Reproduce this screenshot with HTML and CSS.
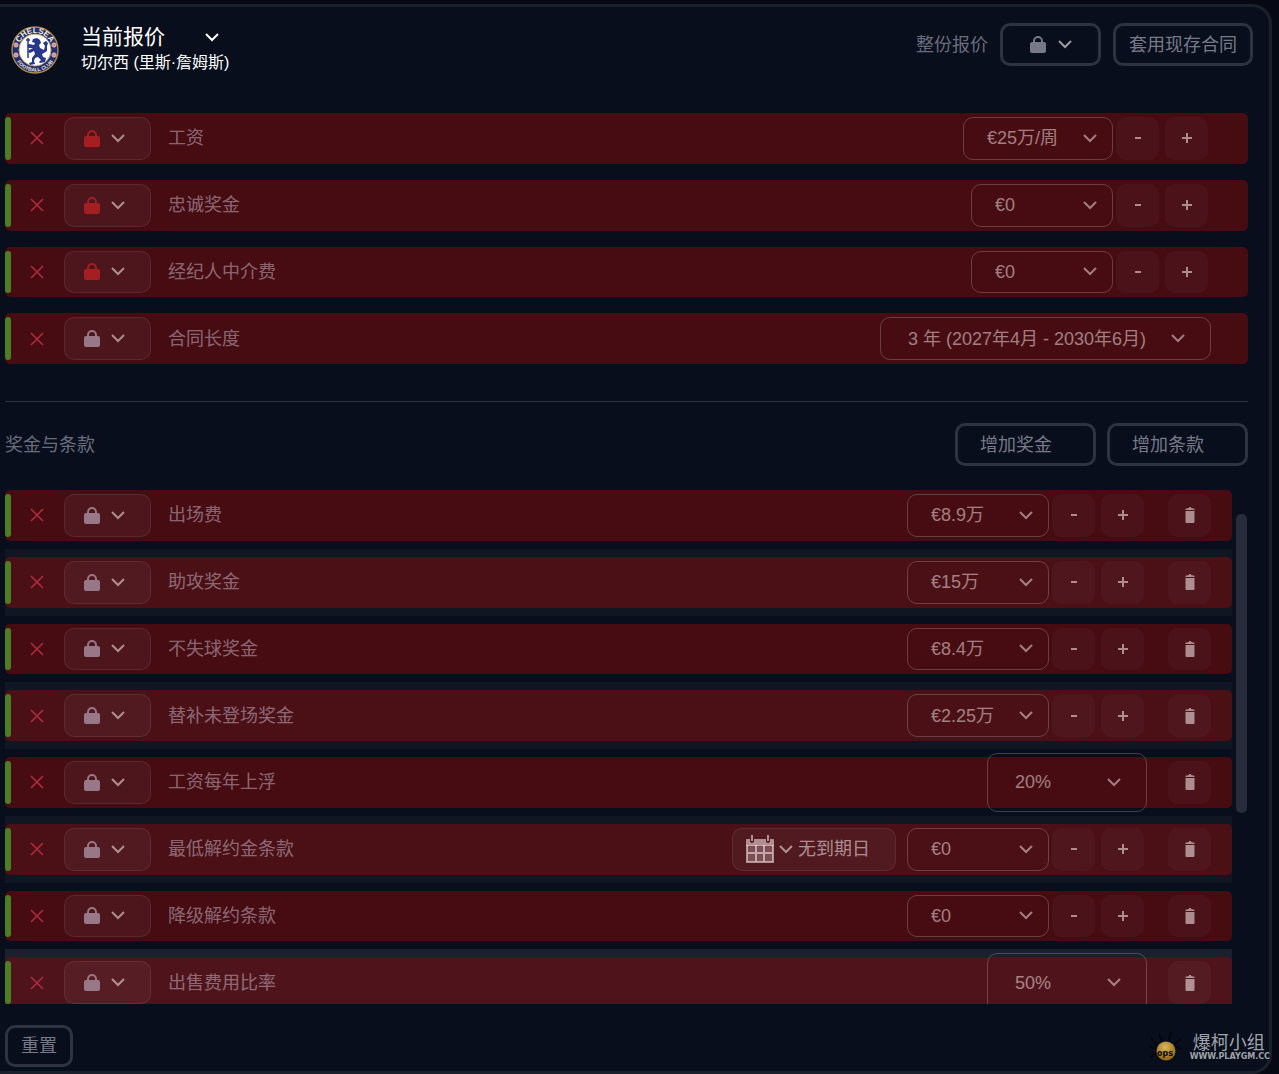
FILE: index.html
```html
<!DOCTYPE html>
<html lang="zh-CN">
<head>
    <meta charset="UTF-8">
    <meta name="viewport" content="width=device-width, initial-scale=1.0">
    <title>当前报价</title>
    <link rel="stylesheet" href="styles.css">
</head>
<body>
<svg class="sprite" aria-hidden="true">
    <symbol id="lock" viewBox="0 0 16 17">
        <path d="M4 8V5a4 4 0 0 1 8 0V8" fill="none" stroke="currentColor" stroke-width="2"/>
        <rect x="0" y="6" width="16" height="11" rx="2" fill="currentColor"/>
    </symbol>
    <symbol id="chevron" viewBox="0 0 14 9">
        <path d="M1 1l6 6 6-6" fill="none" stroke="currentColor" stroke-width="2"/>
    </symbol>
    <symbol id="cross" viewBox="0 0 14 14">
        <path d="M1 1l12 12M13 1L1 13" fill="none" stroke="currentColor" stroke-width="1.6"/>
    </symbol>
    <symbol id="trash" viewBox="0 0 10 16">
        <path d="M.5 3V1.8L4 1V0h2v1l3.500.8V3zM.5 4h9v11a1 1 0 0 1-1 1h-7a1 1 0 0 1-1-1z" fill="currentColor"/>
    </symbol>
    <symbol id="minus" viewBox="0 0 12 12">
        <path d="M3 6h6" stroke="currentColor" stroke-width="2"/>
    </symbol>
    <symbol id="plus" viewBox="0 0 12 12">
        <path d="M1 6h10M6 1v10" stroke="currentColor" stroke-width="2"/>
    </symbol>
    <symbol id="calendar" viewBox="0 0 28 28">
        <rect x="1" y="10" width="26" height="17" fill="currentColor" opacity=".45"/>
        <path d="M1 4h3v2a2 2 0 0 0 4 0V4h12v2a2 2 0 0 0 4 0V4h3a1 1 0 0 1 1 1v6H0V5a1 1 0 0 1 1-1z" fill="currentColor"/>
        <path d="M6 0v6M22 0v6" stroke="currentColor" stroke-width="2"/>
        <path d="M1 10v17h26V10M10 10v17M18 10v17M1 18h26" fill="none" stroke="currentColor" stroke-width="2"/>
    </symbol>
</svg>

<main class="panel">
    <header class="header">
        <svg class="crest" viewBox="0 0 48 48" role="img" aria-label="Chelsea">
            <defs>
                <path id="arc-top" d="M7 24a17 17 0 0 1 34 0"/>
                <path id="arc-bottom" d="M2.500 24a21.500 21.500 0 0 0 43 0"/>
            </defs>
            <circle cx="24" cy="24" r="23" fill="#232e6d" stroke="#b08a50" stroke-width="1.400"/>
            <circle cx="24" cy="24" r="16" fill="#fff" stroke="#c5a878"/>
            <text class="crest-top"><textPath href="#arc-top" startOffset="50%" text-anchor="middle">CHELSEA</textPath></text>
            <text class="crest-bottom"><textPath href="#arc-bottom" startOffset="50%" text-anchor="middle">FOOTBALL CLUB</textPath></text>
            <g fill="#d98a94" stroke="#f0d8d8" stroke-width=".6">
                <circle cx="5" cy="19" r="2.200"/><circle cx="5" cy="29" r="2.200"/>
                <circle cx="43" cy="19" r="2.200"/><circle cx="43" cy="29" r="2.200"/>
            </g>
            <path d="M22 13l4-1 3 2 1 3-2 2 1 3 4 2 1-4-2-3 3-2 2 2-1 3 0 5-3 2-2 1 1 3 3 1-1 4-5 1-1-1 2-2-3-3-3 1-1 3 1 3-5 1-1-2 3-1 0-4 3-4-1-3-4 2-2-1 1-2 4-2-4 0-2-2 2-2 5 1 1-2-3-1z" fill="#27378a"/>
            <path d="M17 12v20M15 14h4" stroke="#27378a" stroke-width="1.500"/>
        </svg>
        <div class="heading">
            <div class="select title-select">
                <select aria-label="报价">
                    <option>当前报价</option>
                </select>
                <svg class="chevron"><use href="#chevron"/></svg>
            </div>
            <div class="subtitle">切尔西 (里斯·詹姆斯)</div>
        </div>
        <div class="header-actions">
            <span class="muted">整份报价</span>
            <button type="button" class="btn btn-lock-all" aria-label="锁定整份报价"><svg class="lock"><use href="#lock"/></svg><svg class="chevron"><use href="#chevron"/></svg></button>
            <button type="button" class="btn">套用现存合同</button>
        </div>
    </header>

    <section class="terms">
        <div class="row">
            <div class="row-body">
                <span class="bar"></span>
                <svg class="cross"><use href="#cross"/></svg>
                <button type="button" class="lock-btn locked" aria-label="锁定"><svg class="lock"><use href="#lock"/></svg><svg class="chevron"><use href="#chevron"/></svg></button>
                <label class="name" for="wage">工资</label>
                <div class="select select-wide"><select id="wage"><option>€25万/周</option></select><svg class="chevron"><use href="#chevron"/></svg></div>
                <button type="button" class="step" aria-label="减少"><svg><use href="#minus"/></svg></button>
                <button type="button" class="step" aria-label="增加"><svg><use href="#plus"/></svg></button>
            </div>
        </div>
        <div class="row">
            <div class="row-body">
                <span class="bar"></span>
                <svg class="cross"><use href="#cross"/></svg>
                <button type="button" class="lock-btn locked" aria-label="锁定"><svg class="lock"><use href="#lock"/></svg><svg class="chevron"><use href="#chevron"/></svg></button>
                <label class="name" for="loyalty">忠诚奖金</label>
                <div class="select"><select id="loyalty"><option>€0</option></select><svg class="chevron"><use href="#chevron"/></svg></div>
                <button type="button" class="step" aria-label="减少"><svg><use href="#minus"/></svg></button>
                <button type="button" class="step" aria-label="增加"><svg><use href="#plus"/></svg></button>
            </div>
        </div>
        <div class="row">
            <div class="row-body">
                <span class="bar"></span>
                <svg class="cross"><use href="#cross"/></svg>
                <button type="button" class="lock-btn locked" aria-label="锁定"><svg class="lock"><use href="#lock"/></svg><svg class="chevron"><use href="#chevron"/></svg></button>
                <label class="name" for="agent">经纪人中介费</label>
                <div class="select"><select id="agent"><option>€0</option></select><svg class="chevron"><use href="#chevron"/></svg></div>
                <button type="button" class="step" aria-label="减少"><svg><use href="#minus"/></svg></button>
                <button type="button" class="step" aria-label="增加"><svg><use href="#plus"/></svg></button>
            </div>
        </div>
        <div class="row">
            <div class="row-body">
                <span class="bar"></span>
                <svg class="cross"><use href="#cross"/></svg>
                <button type="button" class="lock-btn" aria-label="锁定"><svg class="lock"><use href="#lock"/></svg><svg class="chevron"><use href="#chevron"/></svg></button>
                <label class="name" for="length">合同长度</label>
                <div class="select select-length"><select id="length"><option>3 年 (2027年4月 - 2030年6月)</option></select><svg class="chevron"><use href="#chevron"/></svg></div>
            </div>
        </div>
    </section>

    <div class="section-head">
        <h2 class="muted">奖金与条款</h2>
        <button type="button" class="btn btn-add">增加奖金</button>
        <button type="button" class="btn btn-add">增加条款</button>
    </div>

    <section class="scroller">
        <div class="clauses">
            <div class="row">
                <div class="row-body">
                    <span class="bar"></span>
                    <svg class="cross"><use href="#cross"/></svg>
                    <button type="button" class="lock-btn" aria-label="锁定"><svg class="lock"><use href="#lock"/></svg><svg class="chevron"><use href="#chevron"/></svg></button>
                    <label class="name" for="appearance">出场费</label>
                    <div class="select"><select id="appearance"><option>€8.9万</option></select><svg class="chevron"><use href="#chevron"/></svg></div>
                    <button type="button" class="step" aria-label="减少"><svg><use href="#minus"/></svg></button>
                    <button type="button" class="step" aria-label="增加"><svg><use href="#plus"/></svg></button>
                    <button type="button" class="remove" aria-label="删除"><svg><use href="#trash"/></svg></button>
                </div>
            </div>
            <div class="row">
                <div class="row-body">
                    <span class="bar"></span>
                    <svg class="cross"><use href="#cross"/></svg>
                    <button type="button" class="lock-btn" aria-label="锁定"><svg class="lock"><use href="#lock"/></svg><svg class="chevron"><use href="#chevron"/></svg></button>
                    <label class="name" for="assist">助攻奖金</label>
                    <div class="select"><select id="assist"><option>€15万</option></select><svg class="chevron"><use href="#chevron"/></svg></div>
                    <button type="button" class="step" aria-label="减少"><svg><use href="#minus"/></svg></button>
                    <button type="button" class="step" aria-label="增加"><svg><use href="#plus"/></svg></button>
                    <button type="button" class="remove" aria-label="删除"><svg><use href="#trash"/></svg></button>
                </div>
            </div>
            <div class="row">
                <div class="row-body">
                    <span class="bar"></span>
                    <svg class="cross"><use href="#cross"/></svg>
                    <button type="button" class="lock-btn" aria-label="锁定"><svg class="lock"><use href="#lock"/></svg><svg class="chevron"><use href="#chevron"/></svg></button>
                    <label class="name" for="clean-sheet">不失球奖金</label>
                    <div class="select"><select id="clean-sheet"><option>€8.4万</option></select><svg class="chevron"><use href="#chevron"/></svg></div>
                    <button type="button" class="step" aria-label="减少"><svg><use href="#minus"/></svg></button>
                    <button type="button" class="step" aria-label="增加"><svg><use href="#plus"/></svg></button>
                    <button type="button" class="remove" aria-label="删除"><svg><use href="#trash"/></svg></button>
                </div>
            </div>
            <div class="row">
                <div class="row-body">
                    <span class="bar"></span>
                    <svg class="cross"><use href="#cross"/></svg>
                    <button type="button" class="lock-btn" aria-label="锁定"><svg class="lock"><use href="#lock"/></svg><svg class="chevron"><use href="#chevron"/></svg></button>
                    <label class="name" for="unused-sub">替补未登场奖金</label>
                    <div class="select"><select id="unused-sub"><option>€2.25万</option></select><svg class="chevron"><use href="#chevron"/></svg></div>
                    <button type="button" class="step" aria-label="减少"><svg><use href="#minus"/></svg></button>
                    <button type="button" class="step" aria-label="增加"><svg><use href="#plus"/></svg></button>
                    <button type="button" class="remove" aria-label="删除"><svg><use href="#trash"/></svg></button>
                </div>
            </div>
            <div class="row">
                <div class="row-body">
                    <span class="bar"></span>
                    <svg class="cross"><use href="#cross"/></svg>
                    <button type="button" class="lock-btn" aria-label="锁定"><svg class="lock"><use href="#lock"/></svg><svg class="chevron"><use href="#chevron"/></svg></button>
                    <label class="name" for="wage-rise">工资每年上浮</label>
                    <div class="select select-percent"><select id="wage-rise"><option>20%</option></select><svg class="chevron"><use href="#chevron"/></svg></div>
                    <button type="button" class="remove" aria-label="删除"><svg><use href="#trash"/></svg></button>
                </div>
            </div>
            <div class="row">
                <div class="row-body">
                    <span class="bar"></span>
                    <svg class="cross"><use href="#cross"/></svg>
                    <button type="button" class="lock-btn" aria-label="锁定"><svg class="lock"><use href="#lock"/></svg><svg class="chevron"><use href="#chevron"/></svg></button>
                    <label class="name" for="min-release">最低解约金条款</label>
                    <button type="button" class="date-btn"><svg class="calendar"><use href="#calendar"/></svg><svg class="chevron"><use href="#chevron"/></svg>无到期日</button>
                    <div class="select"><select id="min-release"><option>€0</option></select><svg class="chevron"><use href="#chevron"/></svg></div>
                    <button type="button" class="step" aria-label="减少"><svg><use href="#minus"/></svg></button>
                    <button type="button" class="step" aria-label="增加"><svg><use href="#plus"/></svg></button>
                    <button type="button" class="remove" aria-label="删除"><svg><use href="#trash"/></svg></button>
                </div>
            </div>
            <div class="row">
                <div class="row-body">
                    <span class="bar"></span>
                    <svg class="cross"><use href="#cross"/></svg>
                    <button type="button" class="lock-btn" aria-label="锁定"><svg class="lock"><use href="#lock"/></svg><svg class="chevron"><use href="#chevron"/></svg></button>
                    <label class="name" for="relegation">降级解约条款</label>
                    <div class="select"><select id="relegation"><option>€0</option></select><svg class="chevron"><use href="#chevron"/></svg></div>
                    <button type="button" class="step" aria-label="减少"><svg><use href="#minus"/></svg></button>
                    <button type="button" class="step" aria-label="增加"><svg><use href="#plus"/></svg></button>
                    <button type="button" class="remove" aria-label="删除"><svg><use href="#trash"/></svg></button>
                </div>
            </div>
            <div class="row active">
                <div class="row-body">
                    <span class="bar"></span>
                    <svg class="cross"><use href="#cross"/></svg>
                    <button type="button" class="lock-btn" aria-label="锁定"><svg class="lock"><use href="#lock"/></svg><svg class="chevron"><use href="#chevron"/></svg></button>
                    <label class="name" for="sell-on">出售费用比率</label>
                    <div class="select select-percent"><select id="sell-on"><option>50%</option></select><svg class="chevron"><use href="#chevron"/></svg></div>
                    <button type="button" class="remove" aria-label="删除"><svg><use href="#trash"/></svg></button>
                </div>
            </div>
        </div>
        <div class="scrollbar"></div>
    </section>

    <button type="button" class="btn btn-reset">重置</button>
</main>

<div class="watermark">
    <svg class="bug" viewBox="0 0 36 36">
        <defs>
            <radialGradient id="ball" cx="45%" cy="30%" r="70%">
                <stop offset="0" stop-color="#d8b75a"/>
                <stop offset="1" stop-color="#8f6412"/>
            </radialGradient>
        </defs>
        <path d="M9 15L3 8M14 11l-3-7M21 10l2-8M26 15l6-6M8 19l-7-3M28 17l6 2M8 24l-6 3" stroke="#03050a" stroke-width="1.500"/>
        <circle cx="18" cy="21" r="9.500" fill="url(#ball)"/>
        <text x="9" y="26">ops</text>
    </svg>
    <div class="watermark-text">
        <span class="team">爆柯小组</span>
        <span class="site">WWW.PLAYGM.CC</span>
    </div>
</div>
</body>
</html>
```

FILE: styles.css
```css
* {
    box-sizing: border-box;
}

body {
    font-family: 'Liberation Sans', 'Noto Sans CJK SC', sans-serif;
    font-size: 18px;
    line-height: 28px;
    background-color: #060914;
    color: #fff;
    margin: 0;
    padding: 4px 7px 0 0;
}

button,
select {
    font: inherit;
    color: inherit;
    margin: 0;
    cursor: pointer;
}

svg {
    display: block;
    flex: none;
}

.sprite {
    position: absolute;
    width: 0;
    height: 0;
}

.panel {
    padding: 0 21px 4px 5px;
    background-color: #080e1b;
    border: 3px solid #1b202d;
    border-left: 0;
    border-radius: 0 20px 20px 0;
}

.muted {
    color: #6a6c7e;
    font-size: 18px;
    font-weight: normal;
    margin: 0;
}

.lock {
    width: 16px;
    height: 17px;
}

.chevron {
    width: 14px;
    height: 9px;
}

/* header */
.header {
    display: flex;
    align-items: flex-start;
    padding: 16px 0 30px 6px;
    margin-right: -5px;
}

.crest {
    width: 48px;
    height: 48px;
    margin: 3px 22px 0 0;
}

.crest text {
    font-family: 'Liberation Sans', sans-serif;
    font-weight: bold;
    fill: #f4ead8;
}

.crest .crest-top {
    font-size: 8px;
}

.crest .crest-bottom {
    font-size: 5px;
}

.subtitle {
    font-size: 16px;
    line-height: 24px;
}

.header-actions {
    display: flex;
    align-items: center;
    gap: 12px;
    margin-left: auto;
}

.btn {
    height: 43px;
    padding: 0 13px;
    background: none;
    border: 3px solid #2f3242;
    border-radius: 10px;
    color: #777989;
}

.btn-lock-all {
    display: flex;
    align-items: center;
    justify-content: center;
    gap: 12px;
    width: 101px;
}

.btn-lock-all .chevron {
    color: #9b9ba0;
}

.btn-add {
    width: 141px;
    padding: 0 22px;
    text-align: left;
}

/* drop-downs */
.select {
    display: grid;
    align-items: center;
    width: 142px;
    color: rgba(255, 240, 240, 0.5);
}

.select select,
.select .chevron {
    grid-area: 1 / 1;
}

.select select {
    width: 100%;
    height: 100%;
    padding: 0 40px 0 23px;
    appearance: none;
    background: none;
    border: 1px solid rgba(255, 255, 255, 0.2);
    border-radius: 10px;
}

.select .chevron {
    justify-self: end;
    margin-right: 16px;
    pointer-events: none;
}

.select-wide {
    width: 150px;
}

.select-length {
    width: 331px;
    margin-right: -3px;
}

.select-length select,
.select-percent select {
    padding: 0 40px 0 27px;
}

.select-length .chevron,
.select-percent .chevron {
    margin-right: 26px;
}

.select-percent {
    width: 160px;
    margin: -8px 0;
}

.title-select {
    width: 145px;
    color: #fff;
}

.title-select select {
    height: 28px;
    padding: 0;
    border: 0;
    font-size: 21px;
}

.title-select .chevron {
    margin-right: 7px;
}

.select option {
    background-color: #080e1b;
    color: #fff;
}

/* rows */
.terms,
.clauses {
    display: grid;
    grid-auto-rows: 1fr;
}

.terms {
    height: 267px;
}

.row {
    display: flex;
    padding: 8px 0;
}

.row-body {
    display: flex;
    flex: 1;
    padding: 4px 40px 4px 0;
    background-color: #460c12;
    border-radius: 5px;
}

.bar {
    width: 6px;
    background-color: #4d7e25;
    border-radius: 3px;
}

.cross {
    width: 14px;
    height: 14px;
    margin: 0 20px 0 19px;
    align-self: center;
    color: #b02a41;
}

.lock-btn,
.step,
.remove,
.date-btn {
    display: flex;
    align-items: center;
    justify-content: center;
    padding: 0;
    background-color: rgba(255, 255, 255, 0.045);
    border: 0;
    border-radius: 10px;
    color: rgba(255, 240, 240, 0.55);
}

.lock-btn {
    width: 87px;
    gap: 11px;
    padding-right: 6px;
    border: 1px solid rgba(255, 255, 255, 0.08);
}

.lock-btn .lock {
    color: #987886;
}

.locked .lock {
    color: #a31f22;
}

.name {
    margin: 0 auto 0 17px;
    align-self: center;
    color: rgba(236, 228, 250, 0.43);
}

.step {
    width: 43px;
    margin-left: 3px;
    background-color: rgba(255, 255, 255, 0.03);
}

.step + .step {
    margin-left: 6px;
}

.step svg {
    width: 12px;
    height: 12px;
}

.remove {
    width: 43px;
    margin-left: 24px;
    background-color: rgba(255, 255, 255, 0.03);
}

.remove svg {
    width: 10px;
    height: 16px;
}

.select-percent + .remove {
    margin-left: 21px;
}

.date-btn {
    gap: 5px;
    width: 164px;
    margin-right: 11px;
    padding: 0 13px;
    justify-content: flex-start;
    border: 1px solid rgba(255, 255, 255, 0.08);
}

.locked .lock {
    color: #a31f22;
}

.lock-btn.locked .lock {
    color: #a31f22;
}

.calendar {
    width: 28px;
    height: 28px;
}

/* bonuses and clauses */
.section-head {
    display: flex;
    align-items: center;
    gap: 11px;
    margin-top: 29px;
    padding: 21px 0 16px;
    border-top: 1px solid #2f3340;
}

.section-head h2 {
    margin-right: auto;
}

.scroller {
    display: flex;
    gap: 4px;
    height: calc(100vh - 552px);
    overflow: hidden;
}

.clauses {
    flex: 1;
    height: 534px;
}

.clauses .row-body {
    padding-right: 21px;
}

.clauses .row:nth-child(even) {
    background-color: #101622;
}

.clauses .row:nth-child(even) .row-body {
    background-color: #4a1016;
}

.clauses .row.active {
    background-color: #1a202d;
}

.clauses .row.active .row-body {
    background-color: #4f141b;
}

.scrollbar {
    width: 11px;
    height: 299px;
    margin: 32px 1px 0 0;
    background-color: #282b38;
    border-radius: 5px;
}

.btn-reset {
    display: block;
    height: 42px;
    margin-top: 21px;
}

/* watermark */
.watermark {
    position: absolute;
    right: 9px;
    bottom: 8px;
    display: flex;
    align-items: center;
    gap: 6px;
    pointer-events: none;
}

.bug {
    width: 36px;
    height: 36px;
}

.bug text {
    font-family: 'DejaVu Sans', sans-serif;
    font-size: 8px;
    font-weight: bold;
    fill: #0a0a0a;
}

.watermark-text {
    color: #a0a3aa;
}

.team,
.site {
    display: block;
}

.team {
    padding-left: 3px;
    font-size: 18px;
    line-height: 18px;
}

.site {
    font-family: 'DejaVu Sans', sans-serif;
    font-size: 8px;
    font-weight: bold;
    line-height: 10px;
}
```
